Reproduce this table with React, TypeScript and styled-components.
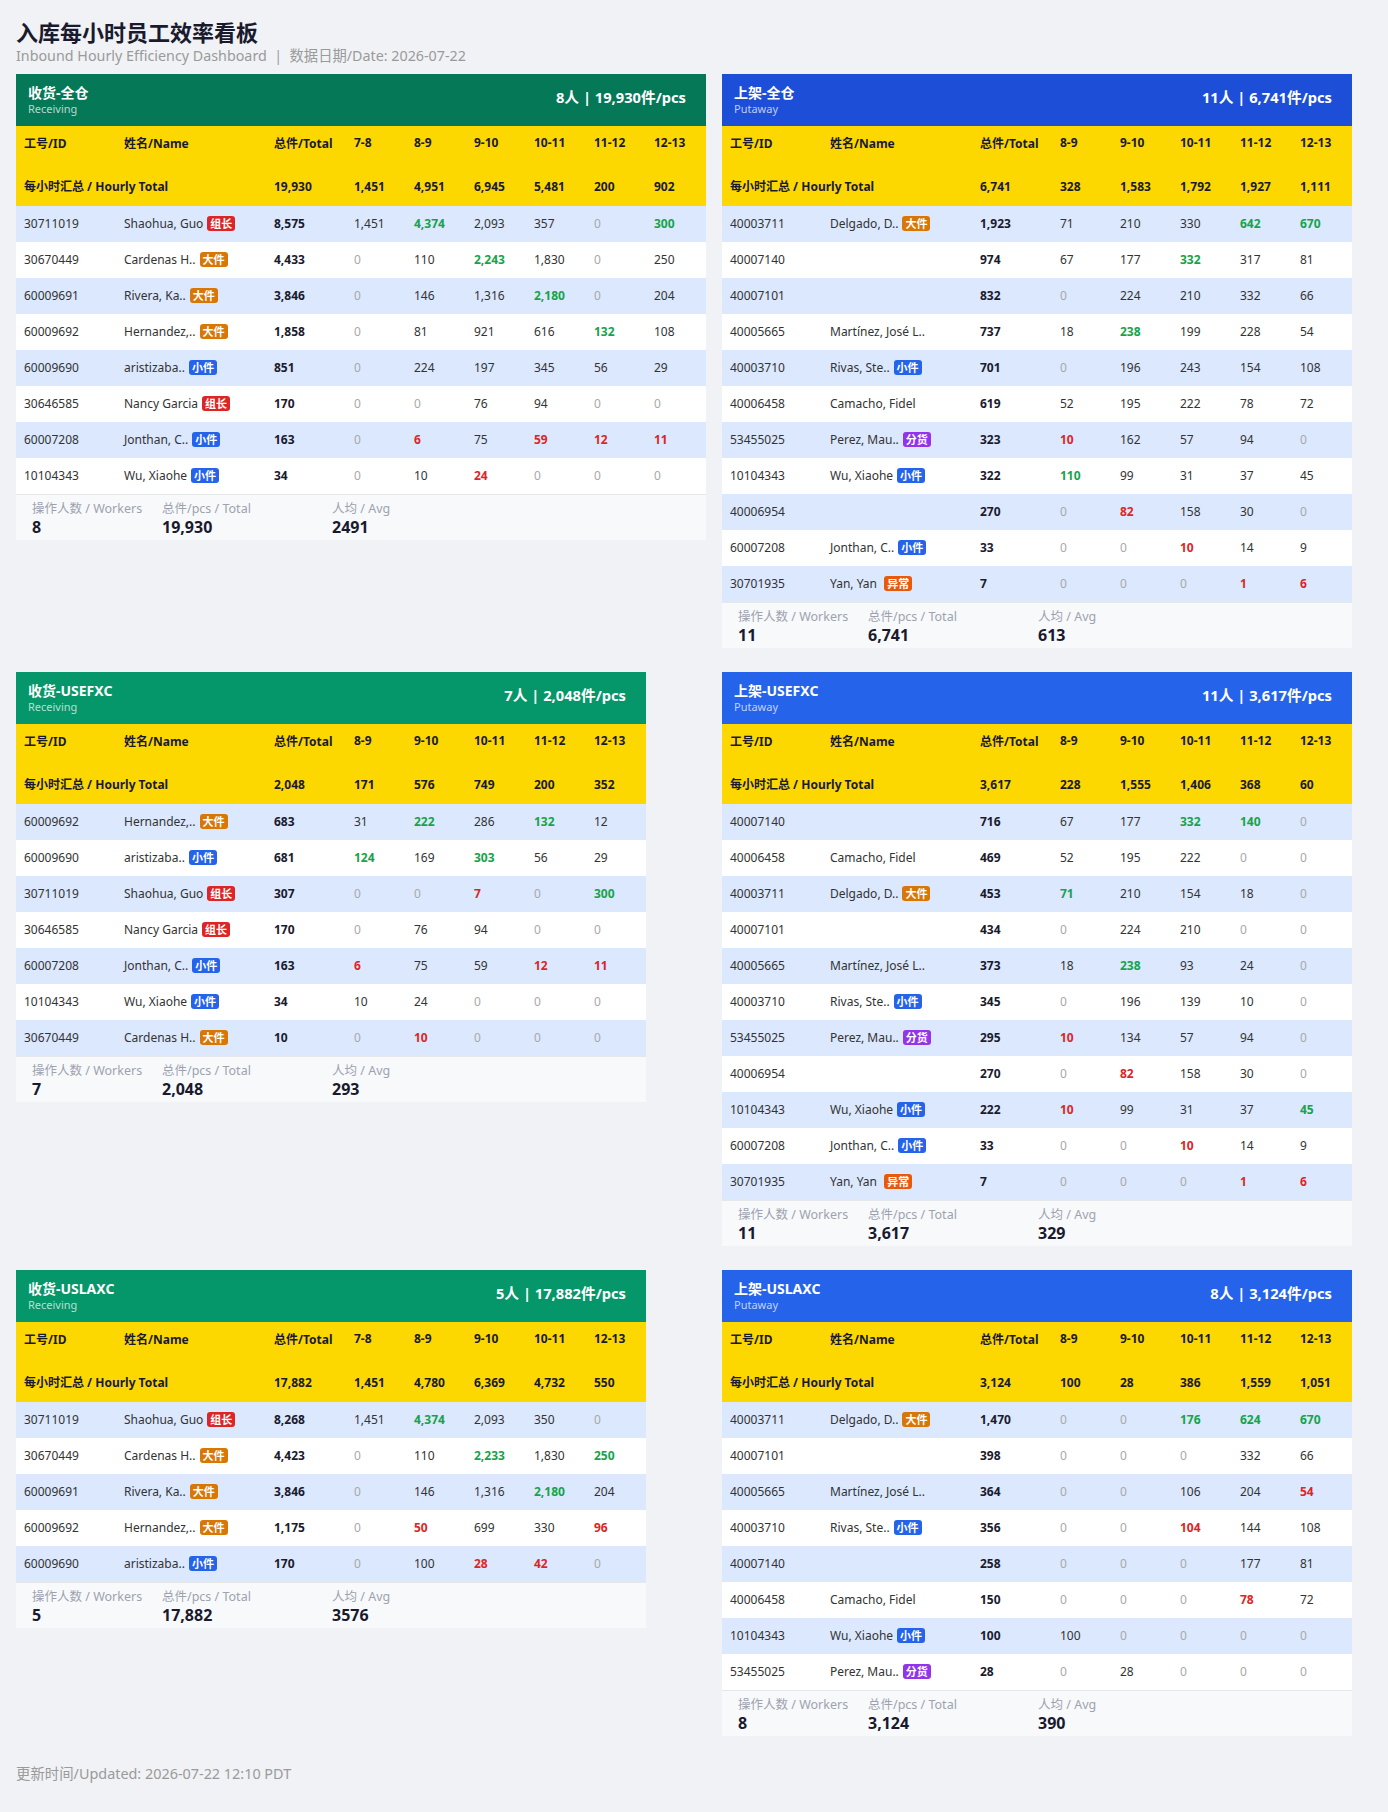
import React from 'react';
import styled, { createGlobalStyle } from 'styled-components';

const GlobalStyle = createGlobalStyle`
  body {
    margin: 0;
    background: #f0f2f5;
    font-family: "Noto Sans", "Noto Sans CJK SC", sans-serif;
    color: #1a1a2e;
  }
`;

type TagKind = '组长' | '大件' | '小件' | '分货' | '异常';

interface Row {
  id: string;
  name: string;
  tag?: TagKind;
  total: string;
  hours: string[]; // suffix g = green, r = red
}

interface Board {
  title: string;
  sub: string;
  color: string;
  summary: string;
  hours: string[];
  totals: string[];
  rows: Row[];
  workers: string;
  pcs: string;
  avg: string;
}

const r = (id: string, name: string, tag: TagKind | undefined, total: string, hours: string): Row => ({
  id,
  name,
  tag,
  total,
  hours: hours.split(' '),
});

const boards: Board[] = [
  {
    title: '收货-全仓',
    sub: 'Receiving',
    color: '#047857',
    summary: '8人 | 19,930件/pcs',
    hours: ['7-8', '8-9', '9-10', '10-11', '11-12', '12-13'],
    totals: ['19,930', '1,451', '4,951', '6,945', '5,481', '200', '902'],
    rows: [
      r('30711019', 'Shaohua, Guo', '组长', '8,575', '1,451 4,374g 2,093 357 0 300g'),
      r('30670449', 'Cardenas H..', '大件', '4,433', '0 110 2,243g 1,830 0 250'),
      r('60009691', 'Rivera, Ka..', '大件', '3,846', '0 146 1,316 2,180g 0 204'),
      r('60009692', 'Hernandez,..', '大件', '1,858', '0 81 921 616 132g 108'),
      r('60009690', 'aristizaba..', '小件', '851', '0 224 197 345 56 29'),
      r('30646585', 'Nancy Garcia', '组长', '170', '0 0 76 94 0 0'),
      r('60007208', 'Jonthan, C..', '小件', '163', '0 6r 75 59r 12r 11r'),
      r('10104343', 'Wu, Xiaohe', '小件', '34', '0 10 24r 0 0 0'),
    ],
    workers: '8',
    pcs: '19,930',
    avg: '2491',
  },
  {
    title: '上架-全仓',
    sub: 'Putaway',
    color: '#1d4ed8',
    summary: '11人 | 6,741件/pcs',
    hours: ['8-9', '9-10', '10-11', '11-12', '12-13'],
    totals: ['6,741', '328', '1,583', '1,792', '1,927', '1,111'],
    rows: [
      r('40003711', 'Delgado, D..', '大件', '1,923', '71 210 330 642g 670g'),
      r('40007140', '', undefined, '974', '67 177 332g 317 81'),
      r('40007101', '', undefined, '832', '0 224 210 332 66'),
      r('40005665', 'Martínez, José L..', undefined, '737', '18 238g 199 228 54'),
      r('40003710', 'Rivas, Ste..', '小件', '701', '0 196 243 154 108'),
      r('40006458', 'Camacho, Fidel', undefined, '619', '52 195 222 78 72'),
      r('53455025', 'Perez, Mau..', '分货', '323', '10r 162 57 94 0'),
      r('10104343', 'Wu, Xiaohe', '小件', '322', '110g 99 31 37 45'),
      r('40006954', '', undefined, '270', '0 82r 158 30 0'),
      r('60007208', 'Jonthan, C..', '小件', '33', '0 0 10r 14 9'),
      r('30701935', 'Yan, Yan ', '异常', '7', '0 0 0 1r 6r'),
    ],
    workers: '11',
    pcs: '6,741',
    avg: '613',
  },
  {
    title: '收货-USEFXC',
    sub: 'Receiving',
    color: '#059669',
    summary: '7人 | 2,048件/pcs',
    hours: ['8-9', '9-10', '10-11', '11-12', '12-13'],
    totals: ['2,048', '171', '576', '749', '200', '352'],
    rows: [
      r('60009692', 'Hernandez,..', '大件', '683', '31 222g 286 132g 12'),
      r('60009690', 'aristizaba..', '小件', '681', '124g 169 303g 56 29'),
      r('30711019', 'Shaohua, Guo', '组长', '307', '0 0 7r 0 300g'),
      r('30646585', 'Nancy Garcia', '组长', '170', '0 76 94 0 0'),
      r('60007208', 'Jonthan, C..', '小件', '163', '6r 75 59 12r 11r'),
      r('10104343', 'Wu, Xiaohe', '小件', '34', '10 24 0 0 0'),
      r('30670449', 'Cardenas H..', '大件', '10', '0 10r 0 0 0'),
    ],
    workers: '7',
    pcs: '2,048',
    avg: '293',
  },
  {
    title: '上架-USEFXC',
    sub: 'Putaway',
    color: '#2563eb',
    summary: '11人 | 3,617件/pcs',
    hours: ['8-9', '9-10', '10-11', '11-12', '12-13'],
    totals: ['3,617', '228', '1,555', '1,406', '368', '60'],
    rows: [
      r('40007140', '', undefined, '716', '67 177 332g 140g 0'),
      r('40006458', 'Camacho, Fidel', undefined, '469', '52 195 222 0 0'),
      r('40003711', 'Delgado, D..', '大件', '453', '71g 210 154 18 0'),
      r('40007101', '', undefined, '434', '0 224 210 0 0'),
      r('40005665', 'Martínez, José L..', undefined, '373', '18 238g 93 24 0'),
      r('40003710', 'Rivas, Ste..', '小件', '345', '0 196 139 10 0'),
      r('53455025', 'Perez, Mau..', '分货', '295', '10r 134 57 94 0'),
      r('40006954', '', undefined, '270', '0 82r 158 30 0'),
      r('10104343', 'Wu, Xiaohe', '小件', '222', '10r 99 31 37 45g'),
      r('60007208', 'Jonthan, C..', '小件', '33', '0 0 10r 14 9'),
      r('30701935', 'Yan, Yan ', '异常', '7', '0 0 0 1r 6r'),
    ],
    workers: '11',
    pcs: '3,617',
    avg: '329',
  },
  {
    title: '收货-USLAXC',
    sub: 'Receiving',
    color: '#059669',
    summary: '5人 | 17,882件/pcs',
    hours: ['7-8', '8-9', '9-10', '10-11', '12-13'],
    totals: ['17,882', '1,451', '4,780', '6,369', '4,732', '550'],
    rows: [
      r('30711019', 'Shaohua, Guo', '组长', '8,268', '1,451 4,374g 2,093 350 0'),
      r('30670449', 'Cardenas H..', '大件', '4,423', '0 110 2,233g 1,830 250g'),
      r('60009691', 'Rivera, Ka..', '大件', '3,846', '0 146 1,316 2,180g 204'),
      r('60009692', 'Hernandez,..', '大件', '1,175', '0 50r 699 330 96r'),
      r('60009690', 'aristizaba..', '小件', '170', '0 100 28r 42r 0'),
    ],
    workers: '5',
    pcs: '17,882',
    avg: '3576',
  },
  {
    title: '上架-USLAXC',
    sub: 'Putaway',
    color: '#2563eb',
    summary: '8人 | 3,124件/pcs',
    hours: ['8-9', '9-10', '10-11', '11-12', '12-13'],
    totals: ['3,124', '100', '28', '386', '1,559', '1,051'],
    rows: [
      r('40003711', 'Delgado, D..', '大件', '1,470', '0 0 176g 624g 670g'),
      r('40007101', '', undefined, '398', '0 0 0 332 66'),
      r('40005665', 'Martínez, José L..', undefined, '364', '0 0 106 204 54r'),
      r('40003710', 'Rivas, Ste..', '小件', '356', '0 0 104r 144 108'),
      r('40007140', '', undefined, '258', '0 0 0 177 81'),
      r('40006458', 'Camacho, Fidel', undefined, '150', '0 0 0 78r 72'),
      r('10104343', 'Wu, Xiaohe', '小件', '100', '100 0 0 0 0'),
      r('53455025', 'Perez, Mau..', '分货', '28', '0 28 0 0 0'),
    ],
    workers: '8',
    pcs: '3,124',
    avg: '390',
  },
];

const tagColors: Record<TagKind, string> = {
  组长: '#dc2626',
  大件: '#d97706',
  小件: '#2563eb',
  分货: '#9333ea',
  异常: '#ea580c',
};

const Page = styled.div`
  padding: 17px 16px 0;
  min-height: 1812px;
  box-sizing: border-box;
`;

const Title = styled.h1`
  margin: 0;
  font-size: 22px;
  line-height: 30px;
  font-weight: 700;
  color: #1a1a2e;
`;

const Subtitle = styled.div`
  font-size: 14.3px;
  line-height: 17px;
  color: #9a9a9a;
`;

const Grid = styled.div`
  display: grid;
  grid-template-columns: max-content max-content;
  column-gap: 16px;
  row-gap: 24px;
  align-items: start;
  justify-items: start;
  margin-top: 10px;
`;

const Card = styled.section`
  background: #fff;
`;

const CardHead = styled.div<{ $bg: string }>`
  height: 52px;
  box-sizing: border-box;
  padding: 0 20px 0 12px;
  display: flex;
  align-items: center;
  justify-content: space-between;
  background: ${(p) => p.$bg};
  color: #fff;
`;

const HeadTitle = styled.div`
  font-size: 14px;
  line-height: 18px;
  font-weight: 700;
`;

const HeadSub = styled.div`
  font-size: 11px;
  line-height: 14px;
  color: rgba(255, 255, 255, 0.72);
`;

const HeadStats = styled.div`
  font-size: 14.7px;
  font-weight: 700;
  margin-bottom: 8px;
`;

const Table = styled.table`
  border-collapse: collapse;
  table-layout: fixed;
  font-size: 12px;
`;

const Th = styled.th<{ $w: number }>`
  width: ${(p) => p.$w}px;
  height: 34px;
  padding: 0 8px 1px;
  box-sizing: border-box;
  text-align: left;
  font-weight: 700;
  color: #1a1a2e;
  background: #fdd800;
  white-space: nowrap;
`;

const SumCell = styled.td`
  height: 46px;
  padding: 6px 8px 0;
  box-sizing: border-box;
  font-weight: 700;
  color: #1a1a2e;
  background: #fdd800;
  white-space: nowrap;
`;

const Tr = styled.tr<{ $alt: boolean }>`
  background: ${(p) => (p.$alt ? '#dbe8fd' : '#fff')};
`;

const Td = styled.td<{ $tone?: string; $bold?: boolean }>`
  height: 36px;
  padding: 0 8px 2px;
  box-sizing: border-box;
  white-space: nowrap;
  overflow: hidden;
  color: ${(p) =>
    p.$tone === 'g' ? '#16a34a' : p.$tone === 'r' ? '#dc2626' : p.$tone === 'z' ? '#a8a8a8' : '#333'};
  font-weight: ${(p) => (p.$bold || p.$tone === 'g' || p.$tone === 'r' ? 700 : 400)};
  ${(p) => p.$bold && 'color: #1a1a2e;'}
`;

const Tag = styled.span<{ $bg: string }>`
  display: inline-block;
  margin-left: 4px;
  padding: 0 3px;
  border-radius: 3px;
  background: ${(p) => p.$bg};
  color: #fff;
  font-size: 11px;
  line-height: 15px;
  font-weight: 700;
`;

const Foot = styled.div`
  display: grid;
  grid-template-columns: 110px 150px auto;
  column-gap: 20px;
  padding: 6px 16px 3px;
  background: #f8f9fb;
  border-top: 1px solid #e5e7eb;
`;

const StatLabel = styled.div`
  font-size: 12.5px;
  line-height: 16px;
  color: #9ca3af;
  white-space: nowrap;
`;

const StatValue = styled.div`
  font-size: 16px;
  line-height: 20px;
  font-weight: 700;
  color: #1a1a2e;
`;

const Updated = styled.div`
  margin-top: 29px;
  font-size: 14.4px;
  line-height: 18px;
  color: #9a9a9a;
`;

const BoardCard: React.FC<{ b: Board }> = ({ b }) => (
  <Card>
    <CardHead $bg={b.color}>
      <div>
        <HeadTitle>{b.title}</HeadTitle>
        <HeadSub>{b.sub}</HeadSub>
      </div>
      <HeadStats>{b.summary}</HeadStats>
    </CardHead>
    <Table style={{ width: 330 + b.hours.length * 60 }}>
      <thead>
        <tr>
          <Th $w={100}>工号/ID</Th>
          <Th $w={150}>姓名/Name</Th>
          <Th $w={80}>总件/Total</Th>
          {b.hours.map((h) => (
            <Th key={h} $w={60}>
              {h}
            </Th>
          ))}
        </tr>
      </thead>
      <tbody>
        <tr>
          <SumCell colSpan={2}>每小时汇总 / Hourly Total</SumCell>
          {b.totals.map((t, i) => (
            <SumCell key={i}>{t}</SumCell>
          ))}
        </tr>
        {b.rows.map((row, i) => (
          <Tr key={row.id + i} $alt={i % 2 === 0}>
            <Td>{row.id}</Td>
            <Td>
              {row.name}
              {row.tag && <Tag $bg={tagColors[row.tag]}>{row.tag}</Tag>}
            </Td>
            <Td $bold>{row.total}</Td>
            {row.hours.map((v, j) => {
              const tone = v.endsWith('g') ? 'g' : v.endsWith('r') ? 'r' : v === '0' ? 'z' : undefined;
              return (
                <Td key={j} $tone={tone}>
                  {v.replace(/[gr]$/, '')}
                </Td>
              );
            })}
          </Tr>
        ))}
      </tbody>
    </Table>
    <Foot>
      <div>
        <StatLabel>操作人数 / Workers</StatLabel>
        <StatValue>{b.workers}</StatValue>
      </div>
      <div>
        <StatLabel>总件/pcs / Total</StatLabel>
        <StatValue>{b.pcs}</StatValue>
      </div>
      <div>
        <StatLabel>人均 / Avg</StatLabel>
        <StatValue>{b.avg}</StatValue>
      </div>
    </Foot>
  </Card>
);

export default function App() {
  return (
    <Page>
      <GlobalStyle />
      <Title>入库每小时员工效率看板</Title>
      <Subtitle>Inbound Hourly Efficiency Dashboard &nbsp;|&nbsp; 数据日期/Date: 2026-07-22</Subtitle>
      <Grid>
        {boards.map((b) => (
          <BoardCard key={b.title} b={b} />
        ))}
      </Grid>
      <Updated>更新时间/Updated: 2026-07-22 12:10 PDT</Updated>
    </Page>
  );
}
